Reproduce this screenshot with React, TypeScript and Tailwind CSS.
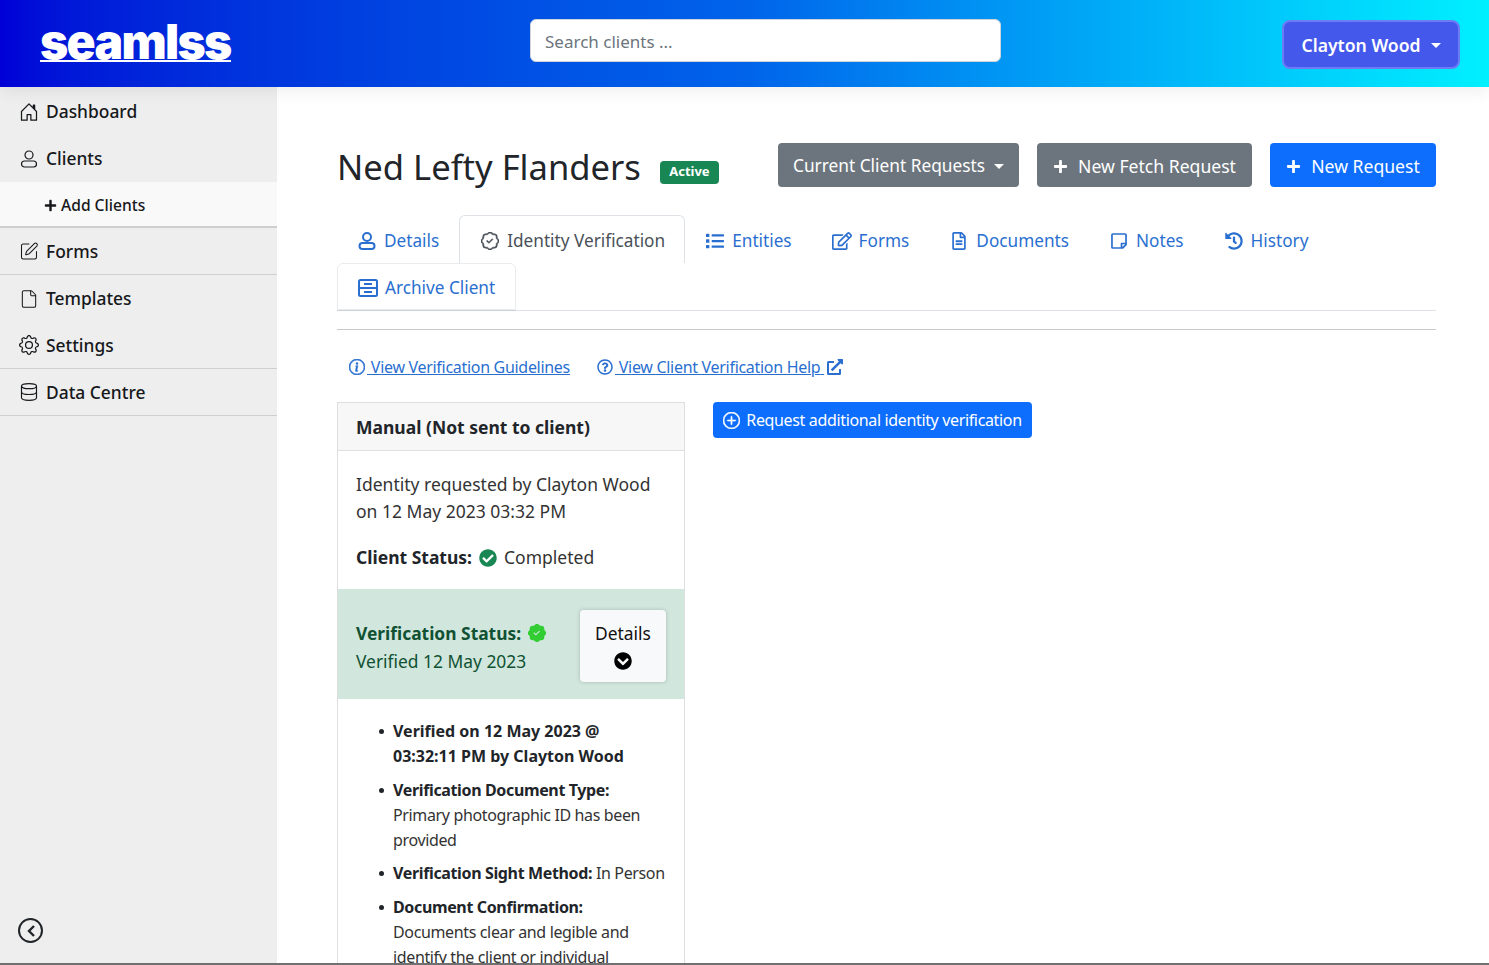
import type { ReactNode } from 'react'
import {
  FaCheckCircle,
  FaChevronCircleDown,
  FaExternalLinkAlt,
  FaHistory,
  FaList,
  FaPlus,
  FaRegEdit,
  FaRegFileAlt,
  FaRegQuestionCircle,
  FaRegStickyNote,
} from 'react-icons/fa'
import { BsGear, BsHouseDoor, BsInfoCircle, BsPatchCheck, BsPatchCheckFill, BsPlusCircle } from 'react-icons/bs'
import { Database, File, SquarePen } from 'lucide-react'

const font = { fontFamily: '"Noto Sans", "Open Sans", sans-serif' }

function UserIcon({ width, stroke }: { width: number; stroke: number }) {
  return (
    <svg width={width} height={width} viewBox="0 0 18 18" fill="none" stroke="currentColor" strokeWidth={stroke}>
      <circle cx="9" cy="5" r="4" />
      <rect x="1.5" y="11" width="15" height="6" rx="3" />
    </svg>
  )
}

function SideItem({ icon, label, line }: { icon: ReactNode; label: string; line?: boolean }) {
  return (
    <div className={`flex h-[47px] items-center gap-[7px] pl-[19px] text-[17.4px] font-medium text-[#16181b] ${line ? 'border-b border-[#cfcfcf]' : ''}`}>
      <span className="flex w-[20px] justify-center text-[20px]">{icon}</span>
      <span>{label}</span>
    </div>
  )
}

function Tab({ icon, label, active, last }: { icon: ReactNode; label: string; active?: boolean; last?: boolean }) {
  return (
    <div
      className={`flex items-center gap-[7px] rounded-t-md pt-[3px] text-[17.2px] ${
        active ? 'h-[48px] w-[226px] border border-b-0 border-[#dee2e6] pl-[20px] text-[#495057]' : 'px-[20px] text-[#2a6fd0]'
      } ${last ? 'h-[47px] border border-[#e9ecef] shadow-[0_1px_1px_rgba(0,0,0,0.08)]' : 'h-[48px]'}`}
    >
      <span className="flex w-[20px] justify-center text-[18px]">{icon}</span>
      <span>{label}</span>
    </div>
  )
}

function ArchiveIcon() {
  return (
    <svg width="20" height="18" viewBox="0 0 20 18" fill="none" stroke="currentColor" strokeWidth="2">
      <rect x="1" y="1" width="18" height="16" rx="1.5" />
      <path d="M1 9h18M6 5h8M6 13h8" />
    </svg>
  )
}

function Item({ children, gap }: { children: ReactNode; gap: string }) {
  return (
    <li className={`relative ${gap}`}>
      <span className="absolute top-[10px] -left-[14px] h-[5px] w-[5px] rounded-full bg-[#212529]" />
      {children}
    </li>
  )
}

export default function App() {
  return (
    <div className="flex h-[965px] w-full flex-col overflow-hidden border-b-2 border-[#707070] bg-white text-[#212529]" style={font}>
      <header className="relative z-10 flex h-[87px] shrink-0 items-center bg-gradient-to-r from-[#0000d6] via-[#0063ea] to-[#00f0ff] shadow-[0_6px_14px_rgba(0,0,0,0.06)]">
        <div className="ml-[40px] w-[490px]">
          <span
            className="mt-[2px] inline-block border-b-2 border-white text-[48px] leading-[36px] font-black tracking-[-0.035em] text-white"
            style={{ fontFamily: 'Inter, sans-serif' }}
          >
            seamlss
          </span>
        </div>
        <div className="mb-[6px] flex h-[43px] w-[471px] items-center rounded-md border border-[#ced4da] bg-white px-[14px] pt-[2px] text-[17px] text-[#6c757d]">
          Search clients ...
        </div>
        <div className="mt-[1px] mr-[29px] ml-auto flex h-[49px] w-[178px] items-center justify-center gap-[10px] rounded-lg border-2 border-[#6b7cf5] bg-[#4558ec] pt-[2px] text-[17.6px] font-semibold text-white">
          Clayton Wood
          <span className="h-0 w-0 border-x-[5px] border-t-[5px] border-x-transparent border-t-white" />
        </div>
      </header>

      <div className="flex min-h-0 flex-1">
        <aside className="flex w-[277px] shrink-0 flex-col bg-[#eeeeee]">
          <div className="mt-[1px]">
            <SideItem icon={<BsHouseDoor />} label="Dashboard" />
            <SideItem icon={<UserIcon width={18} stroke={1.2} />} label="Clients" />
            <div className="flex h-[46px] items-center border-b-2 border-[#cfcfcf] bg-[#f9f9f9] pt-[3px] pl-[44px] text-[15.6px] font-medium text-[#16181b]">
              <FaPlus className="mr-[4px] text-[13px]" />
              Add Clients
            </div>
            <SideItem icon={<SquarePen size={21} strokeWidth={1.25} />} label="Forms" line />
            <SideItem icon={<File size={20} strokeWidth={1.25} />} label="Templates" />
            <SideItem icon={<BsGear />} label="Settings" line />
            <SideItem icon={<Database size={20} strokeWidth={1.4} />} label="Data Centre" line />
          </div>
          <div className="mt-auto mb-[20px] ml-[18px] flex h-[25px] w-[25px] items-center justify-center rounded-full border-2 border-[#212529] text-[#212529]">
            <svg width="10" height="12" viewBox="0 0 10 12" fill="none" stroke="currentColor" strokeWidth="2.4">
              <path d="M8 1 3 6l5 5" />
            </svg>
          </div>
        </aside>

        <main className="min-w-0 flex-1 pt-[56px] pr-[53px] pl-[60px]">
          <div className="flex h-[44px] items-center">
            <h1 className="mt-[4px] text-[34.6px] leading-[50px] font-normal">Ned Lefty Flanders</h1>
            <span className="mt-[14px] ml-[19px] flex h-[23px] w-[59px] items-center justify-center rounded-[4px] bg-[#198754] text-[13px] font-bold text-white">Active</span>
            <div className="ml-auto flex gap-[18px] text-white">
              <div className="flex h-[44px] w-[241px] items-center justify-center gap-[9px] rounded-[4px] bg-[#6c757d] pt-[2px] text-[17.3px]">
                Current Client Requests
                <span className="h-0 w-0 border-x-[5px] border-t-[5px] border-x-transparent border-t-white" />
              </div>
              <div className="flex h-[44px] w-[215px] items-center justify-center gap-[10px] rounded-[4px] bg-[#6c757d] pt-[2px] text-[17.6px]">
                <FaPlus className="text-[15px]" />
                New Fetch Request
              </div>
              <div className="flex h-[44px] w-[166px] items-center justify-center gap-[10px] rounded-[4px] bg-[#0d6efd] pt-[2px] text-[17.6px]">
                <FaPlus className="text-[15px]" />
                New Request
              </div>
            </div>
          </div>

          <nav className="mt-[28px] flex flex-wrap border-b border-[#dee2e6]">
            <Tab icon={<UserIcon width={18} stroke={2} />} label="Details" />
            <Tab icon={<BsPatchCheck strokeWidth={0.5} />} label="Identity Verification" active />
            <Tab icon={<FaList />} label="Entities" />
            <Tab icon={<FaRegEdit className="text-[20px]" />} label="Forms" />
            <Tab icon={<FaRegFileAlt />} label="Documents" />
            <Tab icon={<FaRegStickyNote />} label="Notes" />
            <Tab icon={<FaHistory />} label="History" />
            <Tab icon={<ArchiveIcon />} label="Archive Client" last />
          </nav>
          <div className="mt-[18px] border-t border-[#c8c8c8]" />

          <div className="mt-[26px] ml-[12px] flex items-center gap-[27px] text-[16px] leading-[22px] tracking-[-0.3px] text-[#2a6fd0]">
            <a className="underline">
              <BsInfoCircle className="mr-[2px] inline align-[-2px] text-[16px]" strokeWidth={0.6} /> View Verification Guidelines
            </a>
            <a className="underline">
              <FaRegQuestionCircle className="mr-[2px] inline align-[-2px] text-[16px]" /> View Client Verification Help{' '}
              <FaExternalLinkAlt className="ml-[3px] inline align-[-2px] text-[16px]" />
            </a>
          </div>

          <div className="mt-[24px] flex items-start gap-[28px]">
            <section className="w-[348px] shrink-0 border border-b-0 border-[#dfdfdf]">
              <div className="flex h-[48px] items-center border-b border-[#dfdfdf] bg-[#f7f7f7] pt-[2px] pl-[18px] text-[17.5px] font-bold">
                Manual (Not sent to client)
              </div>
              <div className="px-[18px] pt-[20px] pb-[18px] text-[17.5px] leading-[27px] text-[#333]">
                <p>Identity requested by Clayton Wood on 12 May 2023 03:32 PM</p>
                <p className="mt-[19px] flex items-center gap-[7px]">
                  <b className="text-[#212529]">Client Status:</b>
                  <FaCheckCircle className="text-[18px] text-[#198754]" />
                  Completed
                </p>
              </div>
              <div className="flex h-[110px] items-center justify-between bg-[#d1e7dd] px-[18px] text-[17.4px] text-[#0f5132]">
                <div className="pt-[6px] leading-[28px]">
                  <div className="flex items-center gap-[7px] font-bold">
                    Verification Status:
                    <BsPatchCheckFill className="text-[18px] text-[#32cd32]" />
                  </div>
                  <div>Verified 12 May 2023</div>
                </div>
                <div className="mt-[4px] flex h-[72px] w-[86px] flex-col items-center justify-center gap-[5px] rounded-[4px] bg-[#f8f9fa] pb-[2px] text-[#111] shadow-[0_0_4px_rgba(0,0,0,0.2)]">
                  Details
                  <FaChevronCircleDown className="text-[18px] text-black" />
                </div>
              </div>
              <ul className="pt-[20px] pr-[14px] pl-[55px] text-[16px] leading-[25px] tracking-[-0.36px] text-[#333]">
                <Item gap="mb-[9px]">
                  <b className="tracking-normal text-[#212529]">
                    Verified on 12 May 2023 @
                    <br />
                    03:32:11 PM by Clayton Wood
                  </b>
                </Item>
                <Item gap="mb-[8px]">
                  <b className="text-[#212529]">Verification Document Type:</b>
                  <br />
                  Primary photographic ID has been provided
                </Item>
                <Item gap="mb-[9px]">
                  <b className="text-[#212529]">Verification Sight Method:</b> In Person
                </Item>
                <Item gap="">
                  <b className="text-[#212529]">Document Confirmation:</b>
                  <br />
                  Documents clear and legible and identify the client or individual
                </Item>
              </ul>
            </section>
            <div className="flex h-[36px] w-[319px] items-center justify-center gap-[6px] rounded-[4px] bg-[#0d6efd] text-[16px] tracking-[-0.35px] text-white">
              <BsPlusCircle className="text-[17px]" strokeWidth={0.6} />
              Request additional identity verification
            </div>
          </div>
        </main>
      </div>
    </div>
  )
}
